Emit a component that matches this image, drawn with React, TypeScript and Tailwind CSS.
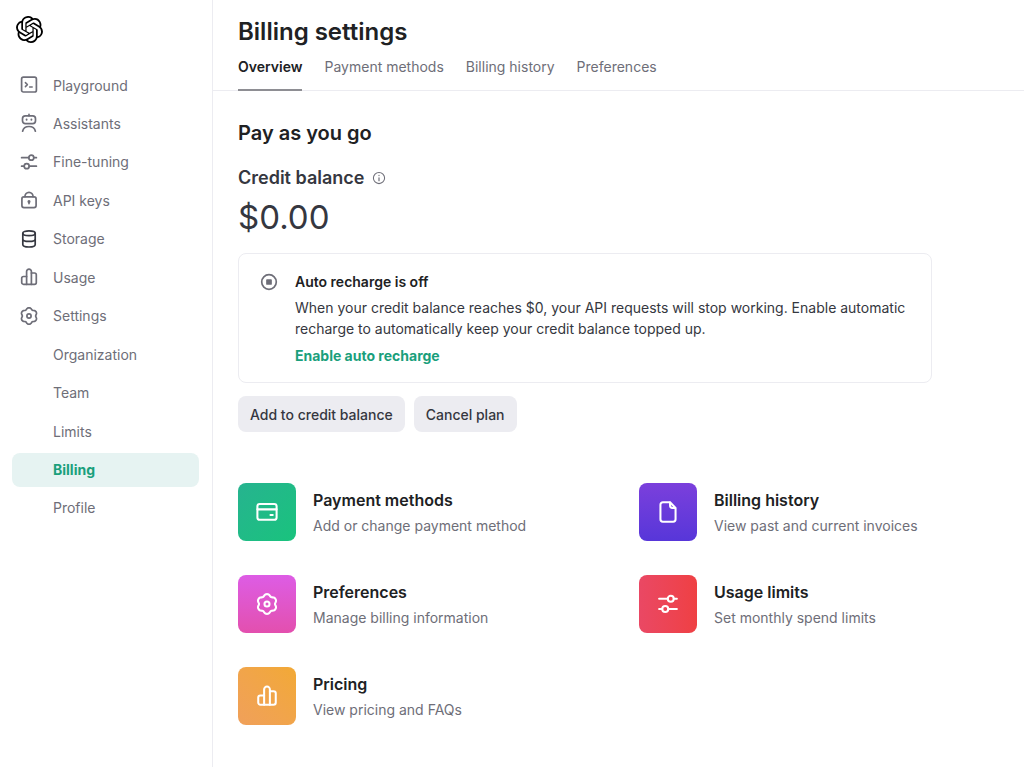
import type { ReactNode } from "react";
import { SiOpenai } from "react-icons/si";

function Icon({ children, className = "size-5" }: { children: ReactNode; className?: string }) {
  return (
    <svg
      viewBox="0 0 20 20"
      className={`shrink-0 ${className}`}
      fill="none"
      stroke="currentColor"
      strokeWidth="1.7"
      strokeLinecap="round"
      strokeLinejoin="round"
      aria-hidden="true"
    >
      {children}
    </svg>
  );
}

// Outline of a six-lobed gear, sampled every five degrees.
const gearOutline =
  Array.from({ length: 72 }, (_, i) => {
    const a = (i * Math.PI) / 36;
    const r = 7.55 + 0.8 * Math.cos(6 * a) - 0.12 * Math.cos(12 * a);
    return `${i ? "L" : "M"}${(10 + r * Math.sin(a)).toFixed(2)} ${(10 - r * Math.cos(a)).toFixed(2)}`;
  }).join("") + "Z";

const terminal = (
  <>
    <rect x="2.6" y="2.2" width="14.8" height="14.8" rx="1.8" />
    <path d="M6.4 7.6 8.4 9.600l-2 2M10.6 11.900h2.6" strokeWidth="1.5" />
  </>
);
const robot = (
  <>
    <rect x="3.5" y="2.9" width="13" height="7.7" rx="2.8" />
    <path d="M10 1.4v1.300M3.6 18.2c.7-3 3.2-4.700 6.400-4.700s5.700 1.700 6.400 4.700" />
    <path d="M7.600 6.400v.4M12.400 6.400v.4" strokeWidth="1.900" />
  </>
);
const sliders = (
  <>
    <circle cx="12.300" cy="5.700" r="2.500" />
    <circle cx="7.700" cy="14.200" r="2.500" />
    <path d="M2.600 5.700h7.200M14.800 5.700h2.600M2.600 14.200h2.600M10.200 14.200h7.200" />
  </>
);
const lock = (
  <>
    <rect x="2.900" y="6.900" width="14.200" height="10.700" rx="2" />
    <path d="M5.900 6.700a4.100 4.400 0 0 1 8.200 0M10 11.600v2" />
    <circle cx="10" cy="11.500" r=".7" fill="currentColor" />
  </>
);
const database = (
  <>
    <ellipse cx="10" cy="4.300" rx="6.200" ry="2.400" />
    <path d="M3.800 4.300v11.200c0 1.400 2.700 2.500 6.200 2.500s6.200-1.100 6.200-2.500V4.300M3.800 9.900c0 1.400 2.700 2.500 6.200 2.500s6.200-1.100 6.200-2.500" />
  </>
);
const bars = (
  <>
    <path d="M7.600 17.300H4.500a1.800 1.800 0 0 1-1.800-1.800v-4.200a1.800 1.800 0 0 1 1.800-1.800h3.100M12.400 6h3.100a1.800 1.800 0 0 1 1.800 1.800v7.700a1.800 1.800 0 0 1-1.800 1.800h-3.100" />
    <path d="M7.600 17.300V4.500a2.400 2.400 0 0 1 4.800 0v12.800z" />
  </>
);
const gear = (
  <>
    <path d={gearOutline} />
    <circle cx="10" cy="10" r="2.100" />
  </>
);
const card = (
  <>
    <rect x="2" y="3.300" width="16" height="13.200" rx="2" />
    <path d="M2 7.800h16M12.900 12.500h1.900" />
  </>
);
const file = (
  <path d="M11.700 1.900H5.700a2 2 0 0 0-2 2v12.200a2 2 0 0 0 2 2h8.600a2 2 0 0 0 2-2V6.600L11.700 1.900v2.700a2 2 0 0 0 2 2h2.600" />
);

const navItems = [
  { label: "Playground", icon: terminal },
  { label: "Assistants", icon: robot },
  { label: "Fine-tuning", icon: sliders },
  { label: "API keys", icon: lock },
  { label: "Storage", icon: database, dark: true },
  { label: "Usage", icon: bars },
  { label: "Settings", icon: gear },
  { label: "Organization" },
  { label: "Team" },
  { label: "Limits" },
  { label: "Billing", active: true },
  { label: "Profile" },
];

const tabs = ["Overview", "Payment methods", "Billing history", "Preferences"];

const shortcuts = [
  { title: "Payment methods", text: "Add or change payment method", icon: card, tile: "bg-linear-to-br from-[#26b38f] to-[#19c37d]" },
  { title: "Billing history", text: "View past and current invoices", icon: file, tile: "bg-linear-to-b from-[#7b3fdc] to-[#5736d9]" },
  { title: "Preferences", text: "Manage billing information", icon: gear, tile: "bg-linear-to-b from-[#dd5ce5] to-[#e34fae]" },
  { title: "Usage limits", text: "Set monthly spend limits", icon: sliders, tile: "bg-linear-to-r from-[#ea4864] to-[#ef4043]" },
  { title: "Pricing", text: "View pricing and FAQs", icon: bars, tile: "bg-linear-to-tr from-[#f0a05a] to-[#f2a935]" },
];

export default function App() {
  return (
    <div className="flex min-h-screen bg-white font-['Inter',sans-serif] text-[14px] text-[#202123]">
      <aside className="w-[213px] shrink-0 border-r border-[#ececf1] pt-4 pr-[13px] pl-3">
        <a href="#" aria-label="Home" className="ml-1 block w-fit">
          <SiOpenai className="size-[27px] text-black" />
        </a>
        <nav className="mt-[25px] flex h-[457px] flex-col justify-between" aria-label="Main">
          {navItems.map((item) => (
            <a
              key={item.label}
              href="#"
              aria-current={item.active ? "page" : undefined}
              className={`flex h-[34px] items-center gap-[14px] rounded-lg pl-[7px] ${
                item.active ? "bg-[#e6f3f2] font-bold text-[#1a9f7c]" : "text-[#6e6e78]"
              }`}
            >
              {item.icon ? (
                <Icon className={item.dark ? "size-5 text-[#353740]" : "size-5"}>{item.icon}</Icon>
              ) : (
                <span className="size-5" />
              )}
              {item.label}
            </a>
          ))}
        </nav>
      </aside>

      <main className="min-w-0 flex-1">
        <header className="border-b border-[#ececf1] px-[25px] pt-[17px]">
          <h1 className="text-[24px] leading-[30px] font-semibold">Billing settings</h1>
          <nav className="mt-2 -mb-px flex gap-[22px]" aria-label="Billing">
            {tabs.map((tab, i) => (
              <a
                key={tab}
                href="#"
                aria-current={i === 0 ? "page" : undefined}
                className={`h-9 leading-6 ${
                  i === 0 ? "border-b-2 border-[#8e8e93] font-semibold" : "text-[#6e6e78]"
                }`}
              >
                {tab}
              </a>
            ))}
          </nav>
        </header>

        <div className="pt-7 pr-6 pb-10 pl-[25px]">
          <h2 className="text-[20px] leading-7 font-semibold">Pay as you go</h2>
          <div className="mt-[19px] flex items-center gap-2 text-[#353740]">
            <h3 className="text-[18px] leading-6 font-semibold">Credit balance</h3>
            <Icon className="size-[14px] text-[#6e6e78]">
              <circle cx="10" cy="10" r="8" strokeWidth="1.500" />
              <path d="M10 9.600v4.200M10 6.300v.3" />
            </Icon>
          </div>
          <div className="mt-[7px] text-[33px] leading-10 text-[#353740]">$0.00</div>

          <section className="mt-4 flex max-w-[694px] gap-4 rounded-lg border border-[#ececf1] pt-[18px] pr-6 pb-[15px] pl-5">
            <Icon className="size-5 text-[#6e6e78]">
              <circle cx="10" cy="10" r="7.300" />
              <rect x="8" y="8" width="4" height="4" fill="currentColor" />
            </Icon>
            <div>
              <h4 className="leading-5 font-semibold">Auto recharge is off</h4>
              <p className="mt-[5px] leading-[21px] text-[#353740]">
                When your credit balance reaches $0, your API requests will stop working. Enable automatic
                recharge to automatically keep your credit balance topped up.
              </p>
              <a href="#" className="mt-1.5 block w-fit leading-[22px] font-bold text-[#1a9f7c]">
                Enable auto recharge
              </a>
            </div>
          </section>

          <div className="mt-[13px] flex gap-[9px]">
            <button type="button" className="h-9 rounded-lg bg-[#ececf1] px-3 font-medium text-[#353740]">
              Add to credit balance
            </button>
            <button type="button" className="h-9 rounded-lg bg-[#ececf1] px-3 font-medium text-[#353740]">
              Cancel plan
            </button>
          </div>

          <div className="mt-[51px] grid grid-cols-2 gap-x-10 gap-y-[34px]">
            {shortcuts.map((s) => (
              <a key={s.title} href="#" className="flex items-center gap-[17px]">
                <span className={`flex size-[58px] shrink-0 items-center justify-center rounded-lg text-white ${s.tile}`}>
                  <Icon className="size-6">{s.icon}</Icon>
                </span>
                <span>
                  <span className="block text-[16px] leading-6 font-semibold">{s.title}</span>
                  <span className="mt-[3px] block leading-[22px] text-[#6e6e78]">{s.text}</span>
                </span>
              </a>
            ))}
          </div>
        </div>
      </main>
    </div>
  );
}
